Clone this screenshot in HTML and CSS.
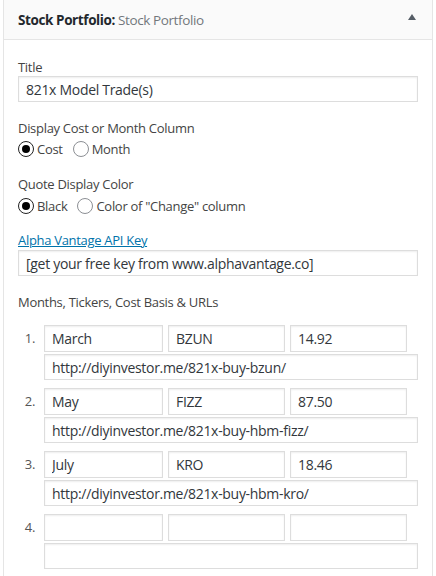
FILE: index.html
```html
<!DOCTYPE html>
<html>
<head>
<meta charset="utf-8">
<link rel="stylesheet" href="styles.css">
</head>
<body>
<div class="widget">
  <div class="widget-top">
    <h3 class="widget-title"><span class="title-strong">Stock Portfolio:</span> <span class="title-in">Stock Portfolio</span></h3>
    <span class="toggle"></span>
  </div>
  <div class="widget-inside">
    <div class="field first">
      <div class="label">Title</div>
      <input class="text wide" type="text" value="821x Model Trade(s)">
    </div>
    <div class="field cost-field">
      <div class="label">Display Cost or Month Column</div>
      <div class="radios">
        <label class="radio"><input type="radio" name="col" checked>Cost</label>
        <label class="radio"><input type="radio" name="col">Month</label>
      </div>
    </div>
    <div class="field color-field">
      <div class="label">Quote Display Color</div>
      <div class="radios low">
        <label class="radio"><input type="radio" name="color" checked>Black</label>
        <label class="radio"><input type="radio" name="color">Color of "Change" column</label>
      </div>
    </div>
    <div class="field key-field">
      <div class="label"><a class="link" href="#">Alpha Vantage API Key</a></div>
      <input class="text wide key" type="text" value="[get your free key from www.alphavantage.co]">
    </div>
    <div class="field list-field">
      <div class="label">Months, Tickers, Cost Basis &amp; URLs</div>
    </div>
    <div class="rows">
      <div class="row">
        <span class="num">1.</span>
        <div class="cells">
          <div class="triple">
            <input class="text month" type="text" value="March">
            <input class="text ticker" type="text" value="BZUN">
            <input class="text cost" type="text" value="14.92">
          </div>
          <input class="text url" type="text" value="http://diyinvestor.me/821x-buy-bzun/">
        </div>
      </div>
      <div class="row">
        <span class="num">2.</span>
        <div class="cells">
          <div class="triple">
            <input class="text month" type="text" value="May">
            <input class="text ticker" type="text" value="FIZZ">
            <input class="text cost" type="text" value="87.50">
          </div>
          <input class="text url" type="text" value="http://diyinvestor.me/821x-buy-hbm-fizz/">
        </div>
      </div>
      <div class="row">
        <span class="num">3.</span>
        <div class="cells">
          <div class="triple">
            <input class="text month" type="text" value="July">
            <input class="text ticker" type="text" value="KRO">
            <input class="text cost" type="text" value="18.46">
          </div>
          <input class="text url" type="text" value="http://diyinvestor.me/821x-buy-hbm-kro/">
        </div>
      </div>
      <div class="row">
        <span class="num">4.</span>
        <div class="cells">
          <div class="triple">
            <input class="text month" type="text" value="">
            <input class="text ticker" type="text" value="">
            <input class="text cost" type="text" value="">
          </div>
          <input class="text url" type="text" value="">
        </div>
      </div>
    </div>
  </div>
</div>
</body>
</html>
```

FILE: styles.css
```css
html, body {
  margin: 0;
  padding: 0;
  background: #ffffff;
}

body {
  font-family: "Open Sans", "Noto Sans", sans-serif;
  font-size: 13px;
  letter-spacing: -0.3px;
  color: #444444;
}

.widget {
  margin-left: 3px;
  width: 430px;
  box-sizing: border-box;
  border-left: 1px solid #e5e5e5;
  border-right: 1px solid #e5e5e5;
  background: #ffffff;
}

.widget-top {
  height: 39px;
  background: #fafafa;
  border-bottom: 1px solid #e5e5e5;
  display: flex;
  align-items: center;
  justify-content: space-between;
  padding: 0 16px 0 14px;
}

.widget-title {
  margin: 0;
  font-size: 13.5px;
  line-height: 18px;
  font-weight: 400;
  letter-spacing: -0.4px;
  color: #72777c;
}

.title-strong {
  font-weight: 700;
  color: #23282d;
}

.toggle {
  width: 0;
  height: 0;
  border-left: 4px solid transparent;
  border-right: 4px solid transparent;
  border-bottom: 6px solid #555d66;
  margin-bottom: 5px;
}

.widget-inside {
  padding: 0 14px 20px 14px;
}

.field {
  margin-top: 16px;
}

.field.first {
  margin-top: 18px;
}

.field.cost-field {
  margin-top: 17px;
}

.field.color-field {
  margin-top: 16px;
}

.field.key-field {
  margin-top: 15px;
}

.field.list-field {
  margin-top: 17px;
}

.label {
  line-height: 18px;
  height: 18px;
}

.link {
  color: #0073aa;
  text-decoration: underline;
}

.text {
  display: block;
  box-sizing: border-box;
  height: 26px;
  margin: 0;
  padding: 0 7px;
  border: 1px solid #dddddd;
  box-shadow: inset 0 1px 2px rgba(0, 0, 0, 0.07);
  border-radius: 0;
  background: #ffffff;
  font-family: "Open Sans", "Noto Sans", sans-serif;
  font-size: 14px;
  letter-spacing: -0.3px;
  color: #32373c;
  outline: none;
}

.wide {
  width: 400px;
}

.key {
  margin-top: 1px;
}

.radios {
  display: flex;
  align-items: center;
  gap: 10px;
  height: 20px;
  margin-top: 2px;
}

.radios.low {
  margin-top: 3px;
}

.radio {
  display: flex;
  align-items: center;
  line-height: 20px;
}

.radio input {
  -webkit-appearance: none;
  appearance: none;
  width: 16px;
  height: 16px;
  margin: 0 3px 0 0;
  border: 1px solid #8c8f94;
  border-radius: 50%;
  background: #ffffff;
  box-sizing: border-box;
  display: flex;
  align-items: center;
  justify-content: center;
}

.radio input:checked {
  border-color: #222222;
}

.radio input:checked::before {
  content: "";
  width: 8px;
  height: 8px;
  border-radius: 50%;
  background: #000000;
}

.rows {
  margin-top: 14px;
}

.row {
  display: flex;
  margin-top: 8px;
}

.row:first-child {
  margin-top: 0;
}

.num {
  width: 27px;
  box-sizing: border-box;
  padding-right: 9px;
  text-align: right;
  line-height: 27px;
  color: #555555;
}

.triple {
  display: flex;
  gap: 5px;
}

.triple .text {
  height: 27px;
}

.month {
  width: 119px;
}

.ticker {
  width: 117px;
}

.cost {
  width: 117px;
}

.url {
  width: 374px;
  margin-top: 2px;
}
```
